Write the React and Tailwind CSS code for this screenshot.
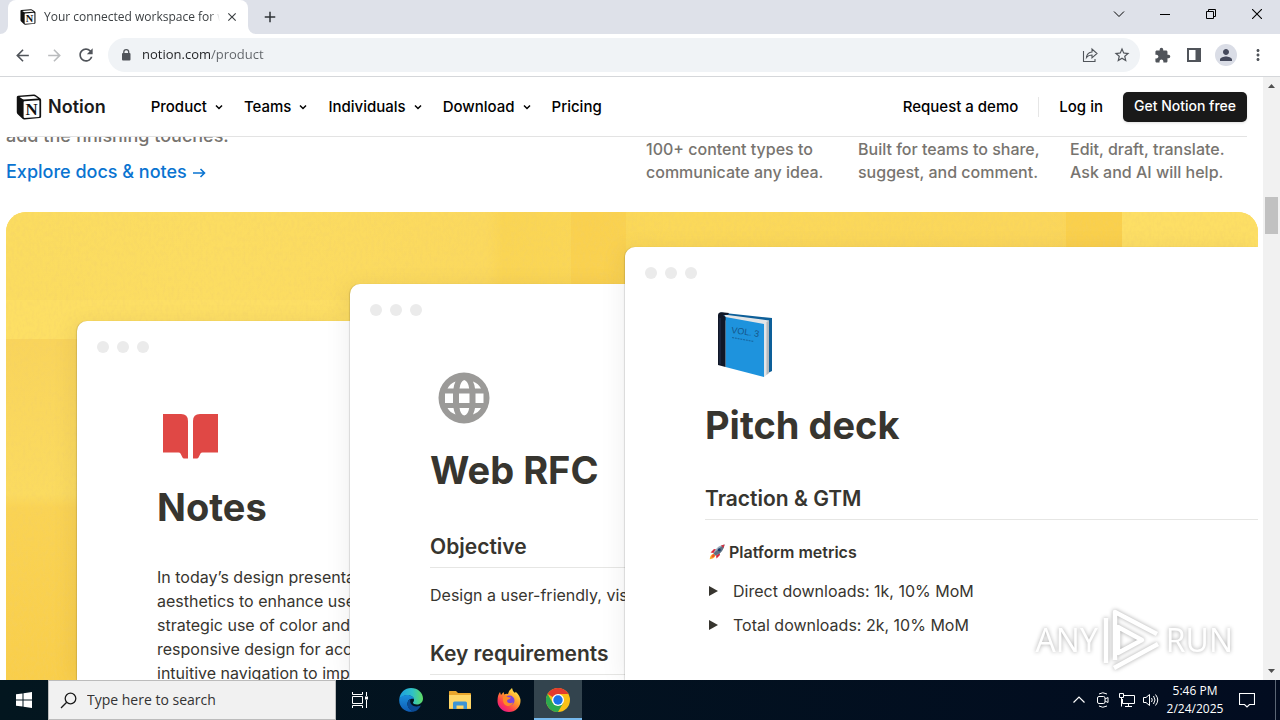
import React from "react";
import {
  MdArrowBack, MdArrowForward, MdRefresh, MdStarBorder, MdExtension,
  MdPerson, MdMoreVert, MdClose, MdAdd,
} from "react-icons/md";

const ui = "font-['Open_Sans','Noto_Sans',sans-serif]";

function NotionMark({ className }) {
  return (
    <svg viewBox="0 0 26 27" className={className} aria-hidden="true">
      <path d="M.3 3.200Q.3 1.900 1.600 1.800L18 .6q1.200-.1 2.200.6l4.400 3.100q1 .8 1 2v17q0 1.600-1.600 1.700L8.300 26.400q-1.300.1-2-.8L1 20.700q-.7-.8-.7-2z" fill="#111" />
      <path d="M3.200 3.200 18 2.100q.8 0 1.500.4l3 2.200L7.600 5.600q-.8 0-1.400-.5z" fill="#fff" />
      <path d="M7.400 8.200q0-.8.800-.8L23 6.500q.8 0 .8.800v15.800q0 .7-.8.800L8.300 24.800q-.9 0-.9-.8z" fill="#fff" />
      <text x="15.700" y="21.500" textAnchor="middle" fontSize="17.500" fontWeight="700" fill="#111" className="font-['Liberation_Serif',serif]">N</text>
    </svg>
  );
}

function Chevron({ className }) {
  return (
    <svg viewBox="0 0 8 8" className={className} fill="none" stroke="currentColor" aria-hidden="true">
      <path d="M1 2.500 4 5.500 7 2.500" strokeWidth="1.500" />
    </svg>
  );
}

function TabStrip() {
  return (
    <div className={`flex h-[34px] shrink-0 items-stretch bg-[#dee1e9] pl-2 ${ui}`}>
      <div className="relative flex w-60 items-center rounded-t-lg bg-white pl-3 pr-2">
        <svg viewBox="0 0 8 8" className="absolute bottom-0 -left-2 size-2" fill="#fff"><path d="M8 0v8H0a8 8 0 0 0 8-8z" /></svg>
        <svg viewBox="0 0 8 8" className="absolute bottom-0 -right-2 size-2" fill="#fff"><path d="M0 0v8h8a8 8 0 0 1-8-8z" /></svg>
        <NotionMark className="size-4 shrink-0" />
        <span className="ml-2 flex-1 overflow-hidden whitespace-nowrap text-xs text-[#3c4043] [mask-image:linear-gradient(to_right,black_94%,transparent)]">
          Your connected workspace for w
        </span>
        <button aria-label="Close tab" className="ml-1 flex size-4 items-center justify-center text-[#3c4043]">
          <MdClose className="size-3.5" />
        </button>
      </div>
      <button aria-label="New tab" className="ml-2 flex w-7 items-center justify-center text-[#2f3337]">
        <MdAdd className="size-[18px]" />
      </button>
      <div className="ml-auto flex pb-1.5 text-black">
        <button aria-label="Search tabs" className="flex w-[46px] items-center justify-center">
          <svg viewBox="0 0 12 12" className="size-3" fill="none" stroke="currentColor"><path d="M1 3.500l5 5 5-5" /></svg>
        </button>
        <button aria-label="Minimize" className="flex w-[46px] items-center justify-center">
          <svg viewBox="0 0 10 10" className="size-2.5" fill="currentColor"><path d="M0 5h10v1H0z" /></svg>
        </button>
        <button aria-label="Restore" className="flex w-[46px] items-center justify-center">
          <svg viewBox="0 0 10 10" className="size-2.5" fill="none" stroke="currentColor"><path d="M.5 2.500h7v7h-7zM2.500 2V.5h7v7H8" /></svg>
        </button>
        <button aria-label="Close" className="flex w-[46px] items-center justify-center">
          <svg viewBox="0 0 10 10" className="size-2.5" fill="none" stroke="currentColor"><path d="M0 0l10 10M10 0L0 10" strokeWidth="1.100" /></svg>
        </button>
      </div>
    </div>
  );
}

function ToolButton({ label, children }) {
  return (
    <button aria-label={label} className="flex size-8 shrink-0 items-center justify-center text-[#50545a]">
      {children}
    </button>
  );
}

function Toolbar() {
  return (
    <div className={`flex h-[43px] shrink-0 items-center gap-1.5 border-b border-[#d5d7da] bg-white px-1.5 ${ui}`}>
      <div className="flex">
        <ToolButton label="Back"><MdArrowBack className="size-[19px]" /></ToolButton>
        <ToolButton label="Forward"><MdArrowForward className="size-[19px] text-[#babcbe]" /></ToolButton>
        <ToolButton label="Reload"><MdRefresh className="size-5" /></ToolButton>
      </div>
      <div className="flex h-[34px] flex-1 items-center rounded-full bg-[#f0f3f6] pl-[11px] pr-0.5">
        <svg viewBox="0 0 14 14" className="size-3.5" aria-hidden="true">
          <rect x="3" y="5" width="8.500" height="7.500" rx="1" fill="#50545a" />
          <path d="M4.800 6V4q0-2.400 2.450-2.400T9.700 4v2" fill="none" stroke="#50545a" strokeWidth="1.300" />
        </svg>
        <input
          aria-label="Address"
          className="ml-[9px] min-w-0 flex-1 bg-linear-to-r from-[#202124] from-[69px] to-[#5f6368] to-[69px] bg-clip-text text-[13px] text-transparent outline-none"
          defaultValue="notion.com/product"
        />
        <ToolButton label="Share">
          <svg viewBox="0 0 16 16" className="size-4" fill="none" stroke="currentColor" strokeWidth="1.100">
            <path d="M1.500 4v10.500h11.500v-2.500M4.500 10.500c.4-3.500 2.500-5.300 5.500-5.500V2l5 4.500-5 4.300V8C7.500 8 5.800 8.700 4.500 10.500z" />
          </svg>
        </ToolButton>
        <ToolButton label="Bookmark"><MdStarBorder className="size-[18px]" /></ToolButton>
      </div>
      <div className="flex">
        <ToolButton label="Extensions"><MdExtension className="size-[17px]" /></ToolButton>
        <ToolButton label="Side panel">
          <svg viewBox="0 0 14 14" className="size-3.5"><path fillRule="evenodd" fill="currentColor" d="M0 0h14v14H0zM2 2v10h6.500V2z" /></svg>
        </ToolButton>
        <ToolButton label="Profile">
          <span className="flex size-[22px] items-center justify-center rounded-full bg-[#dadde6]"><MdPerson className="size-[18px] text-[#45495c]" /></span>
        </ToolButton>
        <ToolButton label="Menu"><MdMoreVert className="size-[18px]" /></ToolButton>
      </div>
    </div>
  );
}

function SiteNav() {
  const items = ["Product", "Teams", "Individuals", "Download"];
  return (
    <header className="relative z-10 bg-white px-4">
      <div className="flex h-[60px] items-center border-b border-[#e3e3e3] pt-px text-[15px] font-medium text-black">
        <a href="#home" className="flex items-center gap-1.5 text-lg font-semibold text-[#1a1a1a]">
          <NotionMark className="size-[26px]" />Notion
        </a>
        <nav className="ml-[45px] flex items-center gap-[21px]">
          {items.map((t) => (
            <button key={t} className="flex items-center gap-2">
              {t}<Chevron className="size-2" />
            </button>
          ))}
          <a href="#pricing">Pricing</a>
        </nav>
        <div className="ml-auto flex items-center">
          <a href="#demo">Request a demo</a>
          <span className="ml-5 h-5 w-px bg-[#e6e6e6]" />
          <a href="#login" className="ml-5">Log in</a>
          <button className="ml-5 h-[30px] rounded-[5px] bg-[#191919] px-[11px] pb-0.5 text-sm text-white shadow">Get Notion free</button>
        </div>
      </div>
    </header>
  );
}

function Paper() {
  return (
    <svg className="absolute inset-0 size-full" aria-hidden="true">
      <defs>
        <filter id="grain" x="0" y="0" width="100%" height="100%">
          <feTurbulence type="fractalNoise" baseFrequency="0.35 0.2" numOctaves="4" seed="4" />
          <feColorMatrix values="0 0 0 0 .88  0 0 0 0 .62  0 0 0 0 .15  3 0 0 0 -1.200" />
        </filter>
        <linearGradient id="top" gradientUnits="userSpaceOnUse" x1="0" y1="0" x2="1116" y2="0">
          <stop offset="0" stopColor="#fbdc60" />
          <stop offset=".2" stopColor="#fcdd62" />
          <stop offset=".43" stopColor="#fbd95e" />
          <stop offset=".445" stopColor="#fad554" />
          <stop offset=".6" stopColor="#fbd95a" />
          <stop offset=".93" stopColor="#fbd75b" />
          <stop offset="1" stopColor="#fad458" />
        </linearGradient>
        <linearGradient id="side" x1="0" y1="0" x2="0" y2="1">
          <stop offset="0" stopColor="#f9d45b" />
          <stop offset=".45" stopColor="#fbdb60" />
          <stop offset=".49" stopColor="#fad354" />
          <stop offset="1" stopColor="#f9ce4a" />
        </linearGradient>
      </defs>
      <rect width="100%" height="100%" fill="#fad65a" />
      <rect width="1116" height="127" fill="url(#top)" />
      <rect y="88" width="345" height="40" fill="#fddf66" opacity=".7" />
      <rect x="565" width="55" height="74" fill="#f9cc48" opacity=".5" />
      <rect y="127" width="72" height="345" fill="url(#side)" />
      <rect x="1060" width="56" height="36" fill="#fad04c" />
      <rect x="1116" width="200" height="60" fill="#fddf65" />
      <rect width="100%" height="100%" filter="url(#grain)" opacity="0.22" />
    </svg>
  );
}

function Doc({ className, children }) {
  return (
    <article className={`relative overflow-hidden rounded-tl-[10px] bg-white pl-20 text-base leading-6 text-[#37352f] shadow-[-6px_0_22px_rgba(0,0,0,0.05),-1px_0_1px_rgba(0,0,0,0.12)] ${className}`}>
      <div className="absolute left-5 top-5 flex gap-2">
        <i className="size-3 rounded-full bg-[#ebebeb]" />
        <i className="size-3 rounded-full bg-[#ebebeb]" />
        <i className="size-3 rounded-full bg-[#ebebeb]" />
      </div>
      {children}
    </article>
  );
}

const title = "mt-4 whitespace-nowrap text-[38px] font-bold leading-[48px]";
const section = "whitespace-nowrap border-b border-[#e6e6e4] pb-[5px] pt-px text-[21px] font-semibold leading-[30px]";

function BookIcon() {
  return (
    <svg viewBox="0 0 80 80" className="size-20">
      <path d="M15 7.500 67 13v53l-8 4z" fill="#0d5f99" />
      <path d="M19 9.500 64 15.500V68l-5 4z" fill="#e3e5e7" />
      <path d="M61.500 17v53l2.500-2V15.500z" fill="#b4b8bc" />
      <path d="M20.500 12 59 19v53L20.500 62z" fill="#1e93dd" />
      <path d="M13 10.500Q13 7 17 7.200l7 .8-1 1.800-5 .4 2.500 1.800v50L13 60z" fill="#101727" />
      <path d="M15 13v46" stroke="#2c3a5a" strokeWidth=".8" />
      <text x="26" y="28" transform="rotate(8 26 28)" fontSize="9" fill="#15578a" className="font-['Liberation_Sans',sans-serif]">VOL. 3</text>
      <path d="M27 32.500l22 4" stroke="#15578a" strokeWidth="1.200" strokeDasharray="2 .8" opacity=".7" />
    </svg>
  );
}

function Rocket() {
  return (
    <svg viewBox="0 0 16 16" className="size-4">
      <path d="M5 9.500C2.500 10 1 12 .7 15.300 4 15 6 13.500 6.600 11z" fill="#fbb12c" />
      <path d="M4.800 10C3.300 10.500 2.500 12 2.400 13.600 4 13.500 5.500 12.700 6 11.200z" fill="#f0542d" />
      <path d="M1.500 8.500 5 5l2.500.5L4.500 9zM7.500 14.500 11 11l-.5-2.500L7 11.500z" fill="#d8283a" />
      <path d="M4.500 9.500C6 5 9.500 1.500 15.500.5 14.500 6.500 11 10 6.500 11.500z" fill="#9fb1c1" />
      <path d="M4.500 9.500C7 7 10 4 15.500.5 14.500 6.500 11 10 6.500 11.500z" fill="#5f7182" />
      <path d="M12 1.600Q13.700.8 15.500.5q-.3 1.800-1.100 3.500z" fill="#d4303f" />
      <circle cx="10.300" cy="5.700" r="1.500" fill="#1d3b6b" />
    </svg>
  );
}

function Toggle({ children, className }) {
  return (
    <button className={`flex items-center whitespace-nowrap ${className}`}>
      <svg viewBox="0 0 9 10" className="ml-1 mr-[15px] h-2.5 w-[9px]" fill="#37352f"><path d="M0 0l9 5-9 5z" /></svg>
      {children}
    </button>
  );
}

function Showcase() {
  return (
    <section className="relative mt-[26px] flex flex-1 overflow-hidden rounded-t-[20px] pl-[71px]">
      <Paper />
      <Doc className="mt-[109px] w-[273px] shrink-0 pt-[82px]">
        <svg viewBox="0 0 64 64" className="size-16" fill="#e04845">
          <path d="M6 11h18q7 0 7 7v37.500h-4q-1 0-1.500-1l-2-4q-.5-1-2-1H6z" />
          <path d="M61 11H43q-7 0-7 7v37.500h4q1 0 1.500-1l2-4q.5-1 2-1H61z" />
        </svg>
        <h2 className={title}>Notes</h2>
        <p className="mt-[34px] whitespace-nowrap">
          In today’s design presentation<br />aesthetics to enhance user<br />strategic use of color and<br />responsive design for access<br />intuitive navigation to improve
        </p>
      </Doc>
      <Doc className="mt-[72px] w-[275px] shrink-0 pt-[82px]">
        <svg viewBox="0 0 64 64" className="size-16">
          <circle cx="34" cy="32" r="25.500" fill="#9b9a98" />
          <g fill="#fff">
            <path d="M15 27.500h8v9.500h-8zM29 27.500h10.500v9.500H29zM45.500 27.500h8v9.500h-8z" />
            <path d="M29.500 22.500q1-7.500 4.700-8.500 4 1 5 8.500zM29.500 42q1 6.500 4.700 7.500 4-1 5-7.500z" />
            <path d="M17.500 22.500q2.500-5 8-7-1.500 3-2 7zM51 22.500q-2.500-5-8-7 1.500 3 2 7zM17.500 42q2.500 4.500 8 6.500-1.500-3-2-6.500zM51 42q-2.500 4.500-8 6.500 1.500-3 2-6.500z" />
          </g>
        </svg>
        <h2 className={title}>Web RFC</h2>
        <h3 className={`mt-[37px] ${section}`}>Objective</h3>
        <p className="mt-[15px] whitespace-nowrap">Design a user-friendly, visually</p>
        <h3 className={`mt-[31px] ${section}`}>Key requirements</h3>
      </Doc>
      <Doc className="mt-[35px] min-w-0 flex-1 pt-[58px]">
        <BookIcon />
        <h2 className={title}>Pitch deck</h2>
        <h3 className={`mt-[34px] ${section}`}>Traction &amp; GTM</h3>
        <h4 className="mt-5 flex items-center gap-1 pl-1 font-semibold"><Rocket />Platform metrics</h4>
        <Toggle className="mt-[15px]">Direct downloads: 1k, 10% MoM</Toggle>
        <Toggle className="mt-2.5">Total downloads: 2k, 10% MoM</Toggle>
      </Doc>
      <div className="absolute bottom-2 right-[25px] flex items-center gap-1 font-['Open_Sans',sans-serif] text-[32px] leading-none text-white drop-shadow-[0_0_2px_rgba(0,0,0,0.35)]">
        <span>ANY</span>
        <svg viewBox="0 0 60 64" className="h-16 w-[60px]" fill="none" stroke="#fff" strokeWidth="4.500" strokeLinejoin="round">
          <path d="M16 19v26l24-13z" />
          <path d="M13 52V4l42 22M4 10v45M12 60l44-24" />
        </svg>
        <span>RUN</span>
      </div>
    </section>
  );
}

function Page() {
  const blurbs = [
    ["100+ content types to", "communicate any idea."],
    ["Built for teams to share,", "suggest, and comment."],
    ["Edit, draft, translate.", "Ask and AI will help."],
  ];
  return (
    <main className="flex min-w-0 flex-1 flex-col overflow-hidden bg-white font-[Inter,sans-serif]">
      <SiteNav />
      <div className="-mt-[15px] flex min-h-0 flex-1 flex-col pl-1.5 pr-[5px]">
        <div className="grid grid-cols-2 gap-7">
          <div className="text-lg font-medium leading-7">
            <p className="text-[#77746f]">add the finishing touches.</p>
            <a href="#docs" className="mt-2 flex items-center gap-[5px] text-[#0a74d1]">
              Explore docs &amp; notes
              <svg viewBox="0 0 14 14" className="size-3.5" fill="none" stroke="currentColor" strokeWidth="1.600"><path d="M1 8h11.500M8.500 4l4 4-4 4" /></svg>
            </a>
          </div>
          <div className="grid grid-cols-3 gap-6 pt-4 text-base font-medium leading-[23px] text-[#77746f]">
            {blurbs.map(([a, b]) => (
              <p key={a} className="whitespace-nowrap">{a}<br />{b}</p>
            ))}
          </div>
        </div>
        <Showcase />
      </div>
    </main>
  );
}

function ScrollBar() {
  return (
    <div className="flex w-[17px] shrink-0 flex-col items-center bg-[#f1f1f1]" aria-hidden="true">
      <svg viewBox="0 0 17 17" className="size-[17px]" fill="#505050"><path d="M5 11l3.500-4L12 11z" /></svg>
      <div className="mt-[103px] h-[37px] w-[13px] bg-[#c1c1c1]" />
      <svg viewBox="0 0 17 17" className="mt-auto size-[17px]" fill="#505050"><path d="M5 6l3.500 4L12 6z" /></svg>
    </div>
  );
}

function EdgeIcon() {
  return (
    <svg viewBox="0 0 24 24" className="size-6">
      <defs>
        <linearGradient id="e1" x1="0" y1="0" x2="1" y2="0"><stop offset="0" stopColor="#1c9fe0" /><stop offset=".55" stopColor="#2fc0c8" /><stop offset="1" stopColor="#5fdc62" /></linearGradient>
        <linearGradient id="e2" x1="0" y1="0" x2="0" y2="1"><stop offset="0" stopColor="#1a8fdc" /><stop offset="1" stopColor="#0f5cb4" /></linearGradient>
      </defs>
      <path d="M.3 11C1 4.500 6 0 12 0c7 0 12 5 12 10.500 0 3.500-2.600 6-6 6-2.600 0-4-.9-4-1.700 0-.6 1-1 1-2.800 0-2.500-2.400-4.700-6-4.700-4.500 0-7.500 2-8.700 3.700z" fill="url(#e1)" />
      <path d="M.3 11C1.500 8.500 4.500 7 8 7c4 0 6.500 2 7 4-1.400-.8-6.500-.5-6.500 5 0 4 4 8 8.500 7C8 26-.7 20 .3 11z" fill="url(#e2)" />
      <path d="M8.500 16c0-2.500 1-4.200 3-5-1.200 3.500 1 7.500 6 7.500 2 0 3.300-.5 4.500-1.200-1.300 3-3.500 5.200-6 6-4 .3-7.500-3-7.500-7.300z" fill="#0b4a94" />
    </svg>
  );
}

function FirefoxIcon() {
  return (
    <svg viewBox="0 0 24 24" className="size-6">
      <defs>
        <linearGradient id="f1" x1=".85" y1=".1" x2=".2" y2=".95"><stop offset="0" stopColor="#ffe84a" /><stop offset=".4" stopColor="#ff9a2a" /><stop offset=".75" stopColor="#ff3c4f" /><stop offset="1" stopColor="#e8178a" /></linearGradient>
      </defs>
      <path d="M3 4l1 3 2.500-3 .8 2.600Q9 5.500 11 6q1-4 4-6 .5 3.500 3 5l.7-1.200Q23.500 8 23.500 13A11.500 11 0 0 1 .5 13Q.5 7 3 4z" fill="url(#f1)" />
      <circle cx="12.500" cy="12.500" r="5" fill="#7a45dd" />
      <path d="M6 8.500q3-1 5.500.8l2.500.2q-1 1.800-3 2-2 1.500.2 3.300 2.500 1 5-.5-1.500 4-5.700 3.700Q6 17 6 12z" fill="#ff8a25" />
    </svg>
  );
}

function ChromeIcon() {
  return (
    <svg viewBox="0 0 24 24" className="size-6">
      <circle cx="12" cy="12" r="12" fill="#fbc116" />
      <path d="M12 12 1.600 6A12 12 0 0 1 22.400 6H12z" fill="#e33b2e" />
      <path d="M1.600 6A12 12 0 0 0 12 24l5.200-9L12 12 6.800 15z" fill="#2da94f" />
      <circle cx="12" cy="12" r="6" fill="#fff" />
      <circle cx="12" cy="12" r="4.700" fill="#1a73e8" />
    </svg>
  );
}

function Taskbar() {
  const app = "flex w-12 items-center justify-center";
  const tray = "flex w-6 items-center justify-center";
  return (
    <footer className={`flex h-10 shrink-0 bg-linear-to-r from-[#03161f] to-[#020c20] text-white ${ui}`}>
      <button aria-label="Start" className={app}>
        <svg viewBox="0 0 16 16" className="size-4" fill="#fff"><path d="M0 2.300 6.500 1.400v6.100H0zM7.500 1.200 16 0v7.500H7.500zM0 8.500h6.500v6.100L0 13.700zM7.500 8.500H16V16l-8.500-1.200z" /></svg>
      </button>
      <div className="flex w-72 items-center gap-2.5 border border-[#bcbcbc] bg-[#f1f1f1] pl-[11px]">
        <svg viewBox="0 0 17 17" className="size-[17px] shrink-0" fill="none" stroke="#1b1b1b" strokeWidth="1.300"><circle cx="10.500" cy="6.500" r="5.300" /><path d="M6.700 10.300 1 16" /></svg>
        <input aria-label="Search" placeholder="Type here to search" className="min-w-0 flex-1 bg-transparent text-sm text-black outline-none placeholder:text-[#333]" />
      </div>
      <button aria-label="Task view" className={app}>
        <svg viewBox="0 0 16 16" className="size-4" fill="none" stroke="#fff"><path d="M.5 0v2.500h10V0M.5 16v-2.500h10V16M.5 4.500h10v7H.5zM14.500 0v4M14.500 8v8" /><path d="M13 4.500h3v3h-3z" fill="#fff" stroke="none" /></svg>
      </button>
      <div className="ml-[3px] flex gap-px">
        <button aria-label="Edge" className={app}><EdgeIcon /></button>
        <button aria-label="File Explorer" className={app}>
          <svg viewBox="0 0 22 20" className="h-5 w-[22px]">
            <path d="M0 1.500Q0 1 .6 1H7l2 2h12q1 0 1 1v15H0z" fill="#e9a62c" />
            <path d="M0 5h22v13.500H0z" fill="#ffd768" />
            <path d="M4 19v-6q0-1.500 1.500-1.500h11q1.500 0 1.500 1.500v6h-3.500v-3.500h-7V19z" fill="#3d94d4" />
          </svg>
        </button>
        <button aria-label="Firefox" className={app}><FirefoxIcon /></button>
        <button aria-label="Chrome" className="flex w-12 items-center justify-center border-b-2 border-[#76b9ed] bg-[#33444e] pt-0.5"><ChromeIcon /></button>
      </div>
      <div className="ml-auto flex">
        <button aria-label="Show hidden icons" className={tray}>
          <svg viewBox="0 0 12 12" className="size-3" fill="none" stroke="#fff" strokeWidth="1.200"><path d="M.5 8.500 6 3l5.500 5.500" /></svg>
        </button>
        <button aria-label="Meet now" className={tray}>
          <svg viewBox="0 0 16 16" className="size-4" fill="none" stroke="#fff"><rect x="2.500" y="4.500" width="7.500" height="7" rx="1.500" /><path d="M10 7l3-1.500v5L10 9M4 2q3.500-2.500 8 0M4 14q3.500 2.500 8 0" /></svg>
        </button>
        <button aria-label="Network" className={tray}>
          <svg viewBox="0 0 16 16" className="size-4" fill="none" stroke="#fff"><path d="M5 3.500h10.500v8H3.500V7M9.500 11.500v3M6 14.500h7M.5 1.500h4v4h-4zM2.500 5.500v9" /></svg>
        </button>
        <button aria-label="Volume" className={tray}>
          <svg viewBox="0 0 16 16" className="size-4" fill="none" stroke="#fff"><path d="M.5 5.500h2.500L6.500 2.500v11L3 10.500H.5zM8.500 6q1.500 2 0 4M10.500 4q3 4 0 8M12.500 2.500q4.500 5.500 0 11" /></svg>
        </button>
        <time className="flex w-16 flex-col items-center justify-center whitespace-nowrap text-xs leading-[18px]"><span>5:46 PM</span><span>2/24/2025</span></time>
        <button aria-label="Notifications" className="flex w-10 items-center justify-center">
          <svg viewBox="0 0 16 16" className="size-4" fill="none" stroke="#fff" strokeWidth="1.100"><path d="M.5 1.500h15v11h-5L8 15l-2.500-2.500h-5z" /></svg>
        </button>
        <span className="ml-2 w-[5px] border-l border-[#5b6675]" />
      </div>
    </footer>
  );
}

export default function App() {
  return (
    <div className="flex h-screen flex-col overflow-hidden bg-white">
      <TabStrip />
      <Toolbar />
      <div className="flex min-h-0 flex-1">
        <Page />
        <ScrollBar />
      </div>
      <Taskbar />
    </div>
  );
}
